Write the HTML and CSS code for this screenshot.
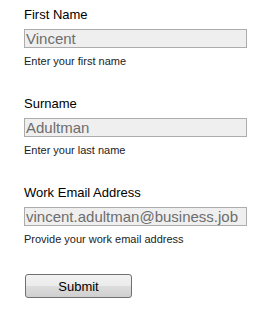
FILE: index.html
```html
<!DOCTYPE html>
<html lang="en">
<head>
  <meta charset="UTF-8">
  <meta name="viewport" content="width=device-width, initial-scale=1.0">
  <title>Sign up</title>
  <link rel="stylesheet" href="styles.css">
</head>
<body>
  <form class="signup">
    <div class="field">
      <label for="first">First Name</label>
      <input id="first" type="text" value="Vincent" disabled>
      <div class="hint">Enter your first name</div>
    </div>
    <div class="field">
      <label for="surname">Surname</label>
      <input id="surname" type="text" value="Adultman" disabled>
      <div class="hint">Enter your last name</div>
    </div>
    <div class="field">
      <label for="email">Work Email Address</label>
      <input id="email" type="text" value="vincent.adultman@business.job" disabled>
      <div class="hint">Provide your work email address</div>
    </div>
    <button type="button" class="submit">Submit</button>
  </form>
</body>
</html>
```

FILE: styles.css
```css
body {
  margin: 0;
  font-family: 'Liberation Sans', Arial, sans-serif;
  background-color: #fff;
  color: #000;
}
.signup {
  padding: 7px 0 0 24px;
}
.field {
  margin-bottom: 28px;
}
.field label {
  display: block;
  font-size: 13px;
  line-height: 15px;
  color: #000;
}
.field input {
  display: block;
  box-sizing: border-box;
  width: 223px;
  height: 19px;
  margin-top: 7px;
  padding: 0 0 0 1px;
  font-family: 'Liberation Sans', Arial, sans-serif;
  font-size: 15px;
  color: #6d6d6d;
  background-color: #efefef;
  border: 1px solid #acacac;
  border-radius: 0;
}
.hint {
  margin-top: 7px;
  font-size: 11px;
  line-height: 13px;
  color: #222;
}
.submit {
  display: block;
  box-sizing: border-box;
  width: 107px;
  height: 24px;
  margin: 25px 0 0 1px;
  padding: 0;
  font-family: 'Liberation Sans', Arial, sans-serif;
  font-size: 13px;
  color: #000;
  background: linear-gradient(#f2f2f2 0%, #ebebeb 50%, #dddddd 51%, #cfcfcf 100%);
  border: 1px solid #707070;
  border-radius: 3px;
}
```
